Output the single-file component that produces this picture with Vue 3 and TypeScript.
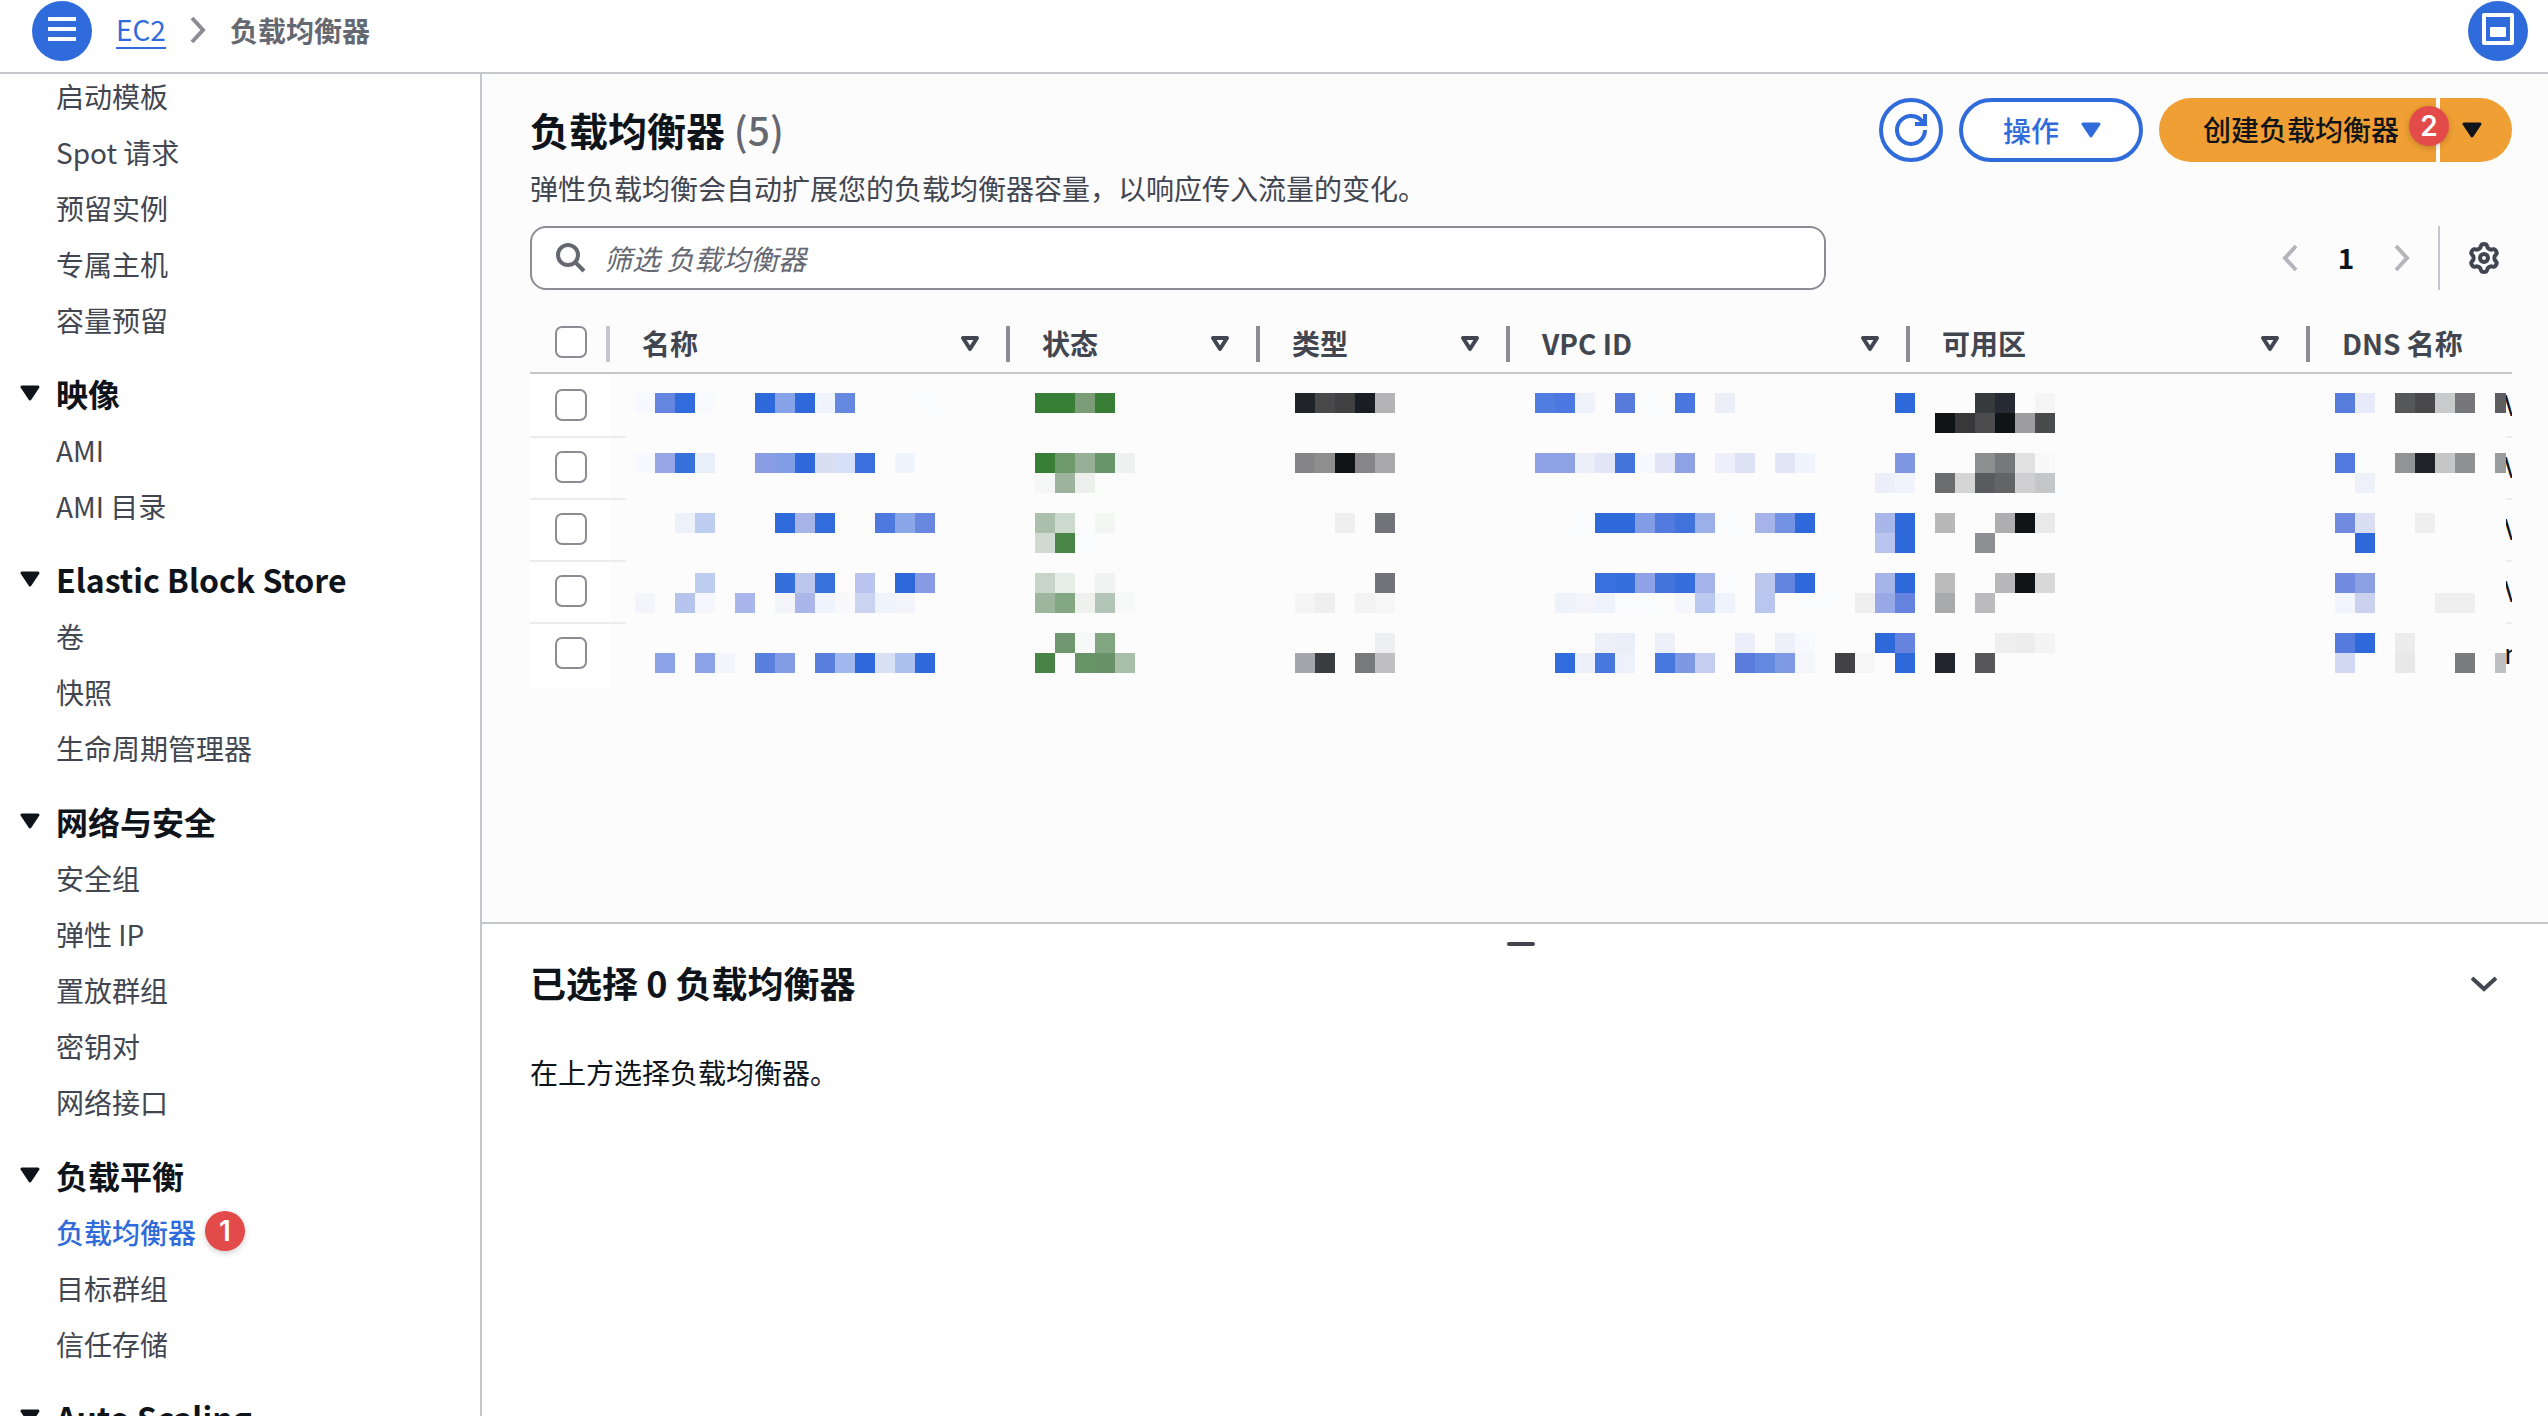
<script setup lang="ts">
import { ref } from 'vue'

interface NavSection {
  title?: string
  items: { label: string; active?: boolean; badge?: number }[]
}

const sections: NavSection[] = [
  {
    items: [
      { label: '启动模板' },
      { label: 'Spot 请求' },
      { label: '预留实例' },
      { label: '专属主机' },
      { label: '容量预留' },
    ],
  },
  { title: '映像', items: [{ label: 'AMI' }, { label: 'AMI 目录' }] },
  { title: 'Elastic Block Store', items: [{ label: '卷' }, { label: '快照' }, { label: '生命周期管理器' }] },
  {
    title: '网络与安全',
    items: [
      { label: '安全组' },
      { label: '弹性 IP' },
      { label: '置放群组' },
      { label: '密钥对' },
      { label: '网络接口' },
    ],
  },
  {
    title: '负载平衡',
    items: [
      { label: '负载均衡器', active: true, badge: 1 },
      { label: '目标群组' },
      { label: '信任存储' },
    ],
  },
  { title: 'Auto Scaling', items: [] },
]

const columns = [
  { label: '名称', width: 400, sortable: true },
  { label: '状态', width: 250, sortable: true },
  { label: '类型', width: 250, sortable: true },
  { label: 'VPC ID', width: 400, sortable: true },
  { label: '可用区', width: 400, sortable: true },
  { label: 'DNS 名称', width: 400, sortable: false },
]

const rows = ['V', 'V', 'V', 'V', 'n']
const selected = ref<number[]>([])
const query = ref('')

// Redaction tiles: line number -> "column:colour" pairs, on a 20px grid
const TILE = 20
const lines: Record<number, string> = {
  0: '0:f7f9fe 1:6486e0 2:306cdb 3:f9fafe 6:2e69dc 7:86a2e8 8:2e69dc 9:f1f4fd 10:6588e0 14:fafbfd 20:387e36 21:387e36 22:7a9d78 23:387e36 33:202429 34:49494b 35:404043 36:1b1d25 37:b4b4b7 45:4f7de0 46:4b79e1 47:eff2fb 49:577bdd 50:fafcfe 52:4877df 54:eceff8 63:2e69dc 67:363a3c 68:262a33 70:f5f5f5 85:567cdd 86:e7eaf8 88:565759 89:49494c 90:c9cacc 91:77777b 93:5e5e60',
  1: '65:101417 66:38383b 67:4c4c4e 68:101417 69:9e9ea2 70:4a4b4d',
  3: '0:f8f9fe 1:96a5e6 2:3570db 3:e9eff9 6:8a9de4 7:809de6 8:2e69dc 9:d9dff3 10:d6e1f8 11:3a70dd 13:f0f4fc 20:387e36 21:6e9a6e 22:97ae97 23:68956a 24:eff0f0 33:858587 34:8e8e8e 35:101417 36:868688 37:a8a8ab 45:8fa1e5 46:8fa1e5 47:eceff9 48:e1e5f6 49:4274dc 50:f8f9fe 51:e1e5f5 52:8fa2e5 54:edf0fa 55:dde3f5 57:e2e6f7 58:f0f4fc 63:8098e3 67:8d8e90 68:77787c 69:e1e1e2 70:f9f9f9 85:527adf 88:929395 89:202429 90:c5c6c8 91:8f9092 93:9a9b9d',
  4: '20:f5f7f7 21:9db39d 22:ecefec 62:eceff9 63:f1f4fe 65:6b6c6e 66:d5d5d6 67:5a5b5e 68:636466 69:d0d0d2 70:c5c6c8 86:eef1fa',
  6: '2:edf1f9 3:bdcef1 7:2f6bda 8:a7b4e8 9:306cdb 12:4e79df 13:8ba6e9 14:6888e0 20:acbfad 21:ccd9cd 23:f4f6f4 35:efefef 37:727378 47:fafcfe 48:2f6adb 49:2f6adb 50:829de6 51:517bdf 52:4074dc 53:9bafe9 54:fafcfe 56:a6b3e9 57:7392e3 58:2e69dc 62:a9b6ea 63:2e69dc 65:b8b8b8 68:aeaeb0 69:101417 70:e9e9e9 85:718be0 86:d9def3 89:efefef',
  7: '20:d0dad0 21:488546 22:fafbfe 62:bac4ee 63:2e69dc 67:8e8f93 86:2e69dc',
  9: '3:bdcef1 7:3470dc 8:bcc6ed 9:3872dd 11:bac4ee 13:2e69dc 14:889ae3 20:c8d4c8 21:e7eee7 23:f1f3f3 37:727378 48:3871dd 49:346fdd 50:8fa2e5 51:4274dc 52:366fdd 53:a4b4ea 54:fafbfe 56:bcc6ed 57:6286e0 58:2e69dc 62:a6b5e9 63:2e69dc 65:bbbbbb 68:b8b8ba 69:101417 70:d8d8d8 85:718be0 86:8ca1e3',
  10: '0:f3f5fb 2:b6c4ee 3:f5f7fd 5:a9b6eb 7:f3f5fa 8:aab6e9 9:f0f4fe 10:f7f9fd 11:cad4f1 12:eff3fb 13:f3f5fa 20:9eb69e 21:83a782 22:eff1ef 23:b3c5b7 24:f7f9f9 33:f5f5f5 34:efefef 36:f3f3f3 37:f6f6f6 46:eef2fa 47:f3f5fb 48:eff3fb 49:fafbfe 50:fafbfe 52:f5f7fd 53:bac9f0 54:eff3fc 56:b8c6f0 58:fafcfe 59:fafcfe 61:efefef 62:99a8e7 63:6684df 65:a9aaac 67:bbbbbd 85:f3f5fe 86:cad2f0 90:efeff0 91:efeff0',
  12: '21:709770 22:f7f9f9 23:81a581 37:eeeff1 48:edf0f9 49:eaeef8 51:edf0f9 55:eceff9 57:edf0f9 58:f8f9fe 62:2e69dc 63:6684df 68:efefef 69:ededed 70:f4f4f4 85:557bdf 86:2e69dc 88:ececec',
  13: '1:8ba3e6 3:8ba3e6 4:f3f5fb 6:5980df 7:829de6 9:5980df 10:a1b8ef 11:2e69dc 12:d8e0f4 13:acc1ef 14:2f6adb 20:478445 22:689568 23:689168 24:a8c0a9 33:a5a6ab 34:393d40 36:78797b 37:c0c0c2 46:306cdb 47:edf0fb 48:4678de 49:eef1fb 51:4678de 52:7e99e4 53:c5cef1 55:597cdd 56:6489e1 57:7e9ae4 58:f5f6fc 60:424246 61:f6f6f6 63:2e69dc 65:22252d 67:58585a 85:d3d9f3 88:e8e8e8 91:7a7b7d 93:bfc0c4',
}

const tiles = Object.entries(lines).flatMap(([line, cells]) =>
  cells.split(' ').map((cell) => {
    const [col, color] = cell.split(':')
    return { x: 9 + Number(col) * TILE, y: 19 + Number(line) * TILE, fill: '#' + color }
  }),
)

// Outline of the settings gear: a circle with six soft lobes
const gear =
  'M' +
  Array.from({ length: 72 }, (_, i) => {
    const a = (i / 72) * Math.PI * 2 - Math.PI / 2
    const r = 12.2 + 1.8 * Math.tanh(2 * Math.cos((i / 72) * Math.PI * 12))
    return `${(16 + r * Math.cos(a)).toFixed(2)} ${(16 + r * Math.sin(a)).toFixed(2)}`
  }).join('L') +
  'Z'
</script>

<template>
  <div class="shell">
    <header class="topbar">
      <button class="round" type="button" aria-label="导航">
        <svg class="menu-icon" width="28" height="24" viewBox="0 0 28 24"><path d="M0 2H28M0 12H28M0 22H28" stroke="#fff" stroke-width="4" /></svg>
      </button>
      <nav class="crumbs">
        <a href="#">EC2</a>
        <svg width="16" height="28" viewBox="0 0 16 28"><path d="M2 2L13 14L2 26" fill="none" stroke="#8c8c94" stroke-width="4" /></svg>
        <span>负载均衡器</span>
      </nav>
      <button class="round right" type="button" aria-label="面板">
        <svg class="panel-icon" width="32" height="32" viewBox="0 0 32 32">
          <rect x="2" y="2" width="28" height="28" fill="none" stroke="#fff" stroke-width="4" stroke-linejoin="round" />
          <rect x="8" y="14" width="16" height="10" rx="1" fill="#fff" />
        </svg>
      </button>
    </header>

    <div class="body">
      <aside class="sidebar">
        <nav class="nav">
          <section v-for="(s, i) in sections" :key="i">
            <h3 v-if="s.title">
              <svg width="20" height="16" viewBox="0 0 20 16"><path d="M2 2H18L10 14Z" fill="#0f141a" stroke="#0f141a" stroke-width="3" stroke-linejoin="round" /></svg>
              {{ s.title }}
            </h3>
            <ul>
              <li v-for="item in s.items" :key="item.label">
                <a href="#" :class="{ active: item.active }">{{ item.label }}</a>
                <span v-if="item.badge" class="badge nav-badge">{{ item.badge }}</span>
              </li>
            </ul>
          </section>
        </nav>
      </aside>

      <div class="content">
        <main class="list">
          <div class="heading">
            <div class="titles">
              <h1>负载均衡器 <span>(5)</span></h1>
              <p>弹性负载均衡会自动扩展您的负载均衡器容量，以响应传入流量的变化。</p>
            </div>
            <div class="actions">
              <button class="outline refresh" type="button" aria-label="刷新">
                <svg width="32" height="32" viewBox="0 0 16 16" fill="none" stroke="#2f6bdb" stroke-width="2">
                  <path d="M10 5h5V0" />
                  <path d="M15 8a6.957 6.957 0 0 1-7 7 6.957 6.957 0 0 1-7-7 6.957 6.957 0 0 1 7-7 6.87 6.87 0 0 1 6.3 4" />
                </svg>
              </button>
              <button class="outline menu" type="button">
                操作
                <svg width="20" height="16" viewBox="0 0 20 16"><path d="M2 2H18L10 14Z" fill="#2f6bdb" stroke="#2f6bdb" stroke-width="3" stroke-linejoin="round" /></svg>
              </button>
              <div class="split">
                <button class="primary create" type="button">创建负载均衡器</button>
                <button class="primary more" type="button" aria-label="更多">
                  <svg width="20" height="16" viewBox="0 0 20 16"><path d="M2 2H18L10 14Z" fill="#0f141a" stroke="#0f141a" stroke-width="3" stroke-linejoin="round" /></svg>
                </button>
                <span class="badge split-badge">2</span>
              </div>
            </div>
          </div>

          <div class="tools">
            <label class="search">
              <svg width="30" height="30" viewBox="0 0 30 30" fill="none" stroke="#656871" stroke-width="4">
                <circle cx="12" cy="12" r="10" />
                <path d="M19 19L28 28" />
              </svg>
              <input v-model="query" type="text" placeholder="筛选 负载均衡器" aria-label="筛选 负载均衡器" />
            </label>
            <div class="pager">
              <button type="button" aria-label="上一页">
                <svg width="16" height="28" viewBox="0 0 16 28"><path d="M14 2L3 14L14 26" fill="none" stroke="#b4b4bb" stroke-width="4" /></svg>
              </button>
              <button class="page" type="button">1</button>
              <button type="button" aria-label="下一页">
                <svg width="16" height="28" viewBox="0 0 16 28"><path d="M2 2L13 14L2 26" fill="none" stroke="#b4b4bb" stroke-width="4" /></svg>
              </button>
              <button class="settings" type="button" aria-label="设置">
                <svg width="32" height="32" viewBox="0 0 32 32" fill="none" stroke="#424650" stroke-width="4" stroke-linejoin="round">
                  <path :d="gear" />
                  <circle cx="16" cy="16" r="4" />
                </svg>
              </button>
            </div>
          </div>

          <div class="table-wrap">
            <table>
              <colgroup>
                <col class="check-col" />
                <col v-for="c in columns" :key="c.label" :style="{ width: c.width + 'px' }" />
              </colgroup>
              <thead>
                <tr>
                  <th class="check">
                    <div class="head"><input type="checkbox" aria-label="全选" /><i class="divider light"></i></div>
                  </th>
                  <th v-for="c in columns" :key="c.label">
                    <div class="head">
                      <span>{{ c.label }}</span>
                      <button v-if="c.sortable" type="button" :aria-label="'按' + c.label + '排序'">
                        <svg width="20" height="16" viewBox="0 0 20 16"><path d="M3 2H17L10 13Z" fill="none" stroke="#424650" stroke-width="4" stroke-linejoin="round" /></svg>
                      </button>
                      <i v-if="c.sortable" class="divider"></i>
                    </div>
                  </th>
                </tr>
              </thead>
              <tbody>
                <tr v-for="(text, i) in rows" :key="i">
                  <td class="check"><input v-model="selected" type="checkbox" :value="i" :aria-label="'选择第 ' + (i + 1) + ' 行'" /></td>
                  <td v-for="n in 5" :key="n"></td>
                  <td class="dns">{{ text }}</td>
                </tr>
              </tbody>
            </table>
            <svg class="mosaic" width="1880" height="314" viewBox="0 0 1880 314" shape-rendering="crispEdges" aria-hidden="true">
              <rect width="1880" height="314" fill="#fcfcfd" />
              <rect v-for="(t, i) in tiles" :key="i" :x="t.x" :y="t.y" width="20" height="20" :fill="t.fill" />
            </svg>
          </div>
        </main>

        <section class="panel">
          <div class="handle"></div>
          <div class="panel-head">
            <h2>已选择 0 负载均衡器</h2>
            <button type="button" aria-label="收起">
              <svg width="28" height="16" viewBox="0 0 28 16"><path d="M2 2L14 13L26 2" fill="none" stroke="#424650" stroke-width="4" /></svg>
            </button>
          </div>
          <p>在上方选择负载均衡器。</p>
        </section>
      </div>
    </div>
  </div>
</template>

<style>
body {
  background: #fff;
}
</style>

<style scoped>
* {
  box-sizing: border-box;
}
.shell {
  height: 100vh;
  display: flex;
  flex-direction: column;
  overflow: hidden;
  font-family: 'Noto Sans CJK SC', 'Open Sans', sans-serif;
  font-size: 28px;
  line-height: 40px;
  color: #0f141a;
}
h1,
h2,
h3,
p,
ul {
  margin: 0;
  padding: 0;
}
button {
  font: inherit;
  color: inherit;
  border: 0;
  background: none;
  padding: 0;
  display: flex;
  align-items: center;
  justify-content: center;
}
svg {
  display: block;
  flex: none;
}
.topbar {
  flex: none;
  display: flex;
  padding: 1px 20px 11px 32px;
  border-bottom: 2px solid #c6c6cd;
}
.round {
  width: 60px;
  height: 60px;
  border-radius: 50%;
  background: #2f6bdb;
}
.right {
  margin-left: auto;
}
.menu-icon {
  margin-bottom: 4px;
}
.panel-icon {
  margin-bottom: 4px;
}
.crumbs {
  display: flex;
  align-items: center;
  gap: 24px;
  margin-left: 24px;
  padding-bottom: 2px;
  font-weight: 700;
  color: #656871;
}
.crumbs a {
  color: #2f6bdb;
  font-weight: 400;
  text-decoration: none;
  line-height: 36px;
  border-bottom: 2px solid #2f6bdb;
}
.body {
  flex: 1;
  min-height: 0;
  display: flex;
}
.sidebar {
  width: 482px;
  flex: none;
  overflow: hidden;
  border-right: 2px solid #c6c6cd;
}
.nav {
  margin-top: -6px;
}
.nav ul {
  list-style: none;
}
.nav li {
  height: 56px;
  padding-left: 56px;
  display: flex;
  align-items: center;
}
.nav a {
  color: #424650;
  text-decoration: none;
}
.nav a.active {
  color: #2f6bdb;
  font-weight: 500;
}
.nav h3 {
  height: 58px;
  margin-top: 16px;
  padding-left: 20px;
  display: flex;
  align-items: center;
  gap: 16px;
  font-size: 32px;
  font-weight: 700;
}
.badge {
  width: 40px;
  height: 40px;
  border-radius: 50%;
  background: #e34a4a;
  color: #fff;
  font-family: Inter, 'Liberation Sans', sans-serif;
  font-weight: 600;
  text-align: center;
  box-shadow: 0 2px 6px rgba(0, 0, 0, 0.2);
}
.nav-badge {
  margin: 0 0 2px 9px;
}
.content {
  flex: 1;
  min-width: 0;
  display: flex;
  flex-direction: column;
}
.list {
  flex: 1;
  min-height: 0;
  overflow: hidden;
  padding: 24px 36px 0 48px;
  background: #fcfcfd;
}
.heading {
  display: flex;
  justify-content: space-between;
  margin-bottom: 18px;
}
.titles {
  padding-top: 6px;
}
h1 {
  font-size: 39px;
  line-height: 50px;
  font-weight: 700;
  margin-bottom: 14px;
}
h1 span {
  font-weight: 500;
  color: #656871;
}
.titles p {
  color: #424650;
}
.actions {
  display: flex;
  gap: 16px;
  height: 64px;
}
.outline {
  border: 4px solid #2f6bdb;
  border-radius: 32px;
  background: #fff;
  color: #2f6bdb;
  font-weight: 500;
}
.refresh {
  width: 64px;
}
.menu {
  gap: 22px;
  padding: 0 38px 0 40px;
}
.split {
  position: relative;
  display: flex;
  gap: 4px;
}
.primary {
  background: #ef9f33;
  font-weight: 500;
}
.create {
  padding: 0 37px 2px 44px;
  border-radius: 32px 0 0 32px;
}
.more {
  width: 72px;
  padding-right: 8px;
  border-radius: 0 32px 32px 0;
}
.split-badge {
  position: absolute;
  top: 8px;
  right: 63px;
}
.tools {
  display: flex;
  justify-content: space-between;
}
.search {
  flex: 1;
  max-width: 1296px;
  height: 64px;
  display: flex;
  align-items: center;
  gap: 18px;
  padding: 0 24px;
  border: 2px solid #8c8c94;
  border-radius: 16px;
  background: #fff;
}
.search input {
  flex: 1;
  border: 0;
  padding: 0;
  font: inherit;
  outline: none;
  background: none;
}
.search input::placeholder {
  color: #656871;
  opacity: 1;
  font-style: italic;
}
.pager {
  display: flex;
  align-items: stretch;
}
.page {
  width: 96px;
  padding-bottom: 2px;
  font-weight: 700;
}
.settings {
  margin-left: 28px;
  padding: 0 12px 0 28px;
  border-left: 2px solid #c6c6cd;
}
.table-wrap {
  position: relative;
  overflow: hidden;
}
table {
  width: 2180px;
  table-layout: fixed;
  border-collapse: separate;
  border-spacing: 0;
}
.check-col {
  width: 80px;
}
th {
  padding: 36px 0 10px 32px;
  border-bottom: 2px solid #c6c6cd;
  color: #424650;
  font-weight: 700;
  text-align: left;
}
.head {
  display: flex;
  height: 36px;
  line-height: 34px;
}
.head button {
  margin-left: auto;
}
.divider {
  width: 4px;
  margin-left: 26px;
  background: #8c8c94;
}
.divider.light {
  margin-left: auto;
  background: #c6c6cd;
}
th.check {
  padding-left: 25px;
}
td {
  height: 62px;
  padding: 13px 0 0;
  vertical-align: top;
  border-bottom: 2px solid #ebebf0;
}
tr:first-child td {
  height: 64px;
  padding-top: 15px;
}
tr:last-child td {
  height: 64px;
  border-bottom: 0;
}
td.check {
  padding-left: 25px;
  background: #fff;
}
tr td.dns {
  padding-left: 194px;
  line-height: 30px;
}
input[type='checkbox'] {
  appearance: none;
  display: block;
  width: 32px;
  height: 32px;
  margin: 0;
  border: 2px solid #8c8c94;
  border-radius: 7px;
  background: #fff;
}
.mosaic {
  position: absolute;
  left: 96px;
  top: 84px;
}
.panel {
  flex: none;
  height: 494px;
  padding: 18px 36px 0 48px;
  border-top: 2px solid #c6c6cd;
}
.handle {
  width: 28px;
  height: 4px;
  margin: 0 auto;
  border-radius: 2px;
  background: #424650;
}
.panel-head {
  display: flex;
  justify-content: space-between;
  height: 48px;
  margin: 12px 0 46px;
}
.panel-head button {
  margin-right: 14px;
  padding-top: 4px;
}
h2 {
  font-size: 36px;
  line-height: 48px;
  font-weight: 700;
}
</style>
